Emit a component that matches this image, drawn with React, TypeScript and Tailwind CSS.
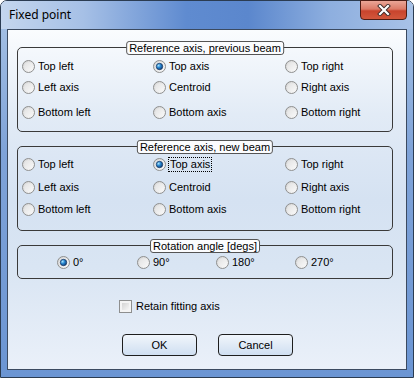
import React from "react";

const Radio = ({ checked }: { checked?: boolean }) => (
  <svg width="13" height="13" viewBox="0 0 13 13" className="shrink-0">
    <defs>
      <linearGradient id="rbg" x1="0" y1="0" x2="1" y2="1">
        <stop offset="0" stopColor="#d2d2d2" />
        <stop offset="1" stopColor="#fdfdfd" />
      </linearGradient>
      <linearGradient id="rin" x1="0" y1="0" x2="1" y2="1">
        <stop offset="0" stopColor="#e2e2e2" />
        <stop offset="1" stopColor="#f8f8f8" />
      </linearGradient>
      <radialGradient id="rdot" cx="0.35" cy="0.35" r="0.7">
        <stop offset="0" stopColor="#a9e2fb" />
        <stop offset="0.45" stopColor="#2a8ad4" />
        <stop offset="1" stopColor="#0d3f7a" />
      </radialGradient>
    </defs>
    <circle cx="6.5" cy="6.5" r="6" fill="url(#rbg)" stroke="#8e8f8f" strokeWidth="1" />
    <circle cx="6.5" cy="6.5" r="4.3" fill="url(#rin)" />
    {checked && <circle cx="6.5" cy="6.5" r="3.2" fill="url(#rdot)" stroke="#1a3a66" strokeWidth="0.8" />}
  </svg>
);

const RItem = ({ label, checked, focus }: { label: string; checked?: boolean; focus?: boolean }) => (
  <div className="flex items-center h-[16px]">
    <Radio checked={checked} />
    <span className={focus ? "ml-[2px] px-[1px] border border-dotted border-black leading-[13px]" : "ml-[3px]"}>{label}</span>
  </div>
);

const Legend = ({ text }: { text: string }) => (
  <div className="absolute left-1/2 -translate-x-1/2 top-[-7px] h-[14px] px-[2px] border border-[#555] rounded-[3px] bg-[#fbfcfe] leading-[12px] whitespace-nowrap">
    {text}
  </div>
);

const Grid = ({ rows, mts }: { rows: [string, string, string][]; mts: string[]; }) => null;

export default function App() {
  const font = { fontFamily: '"Liberation Sans", Arial, sans-serif' };
  return (
    <div
      className="w-[414px] h-[378px] border border-[#2b3c52] rounded-t-[7px] flex flex-col text-[11px] text-black"
      style={font}
    >
      <div className="flex-1 flex flex-col rounded-t-[6px] bg-[linear-gradient(180deg,#a9c4e6_0%,#7fa3d8_40%,#6b95d3_100%)]">
        {/* title bar */}
        <div className="h-[28px] flex items-start rounded-t-[6px] bg-[linear-gradient(90deg,#c4d6ee_0%,#a6c0e6_20%,#5f8bd0_45%,#5b87cd_60%,#8eafdf_80%,#a8c2e7_100%)]">
          <div className="ml-[8px] mt-[6px] text-[12px] leading-[16px] text-black" style={{ fontFamily: '"Noto Sans", "Open Sans", sans-serif' }}>
            Fixed point
          </div>
          <div className="ml-auto mr-[6px] mt-[-1px] w-[47px] h-[20px] rounded-b-[4px] border border-[#4e1d15] bg-[linear-gradient(180deg,#eaa697_0%,#dc7a67_45%,#c8442d_55%,#d2573c_100%)] flex items-center justify-center">
            <svg width="14" height="12" viewBox="0 0 14 12">
              <path d="M3 2 L11 10 M11 2 L3 10" stroke="#3c2a28" strokeWidth="4" strokeLinecap="square" />
              <path d="M3 2 L11 10 M11 2 L3 10" stroke="#ffffff" strokeWidth="2.2" strokeLinecap="square" />
            </svg>
          </div>
        </div>
        {/* client */}
        <div className="mx-[6px] h-[341px] border border-[#3b4a60] bg-[linear-gradient(180deg,#fafcfe_0%,#e2ebf6_25%,#d5e2f2_50%,#d9e5f3_70%,#eaf0f9_100%)] flex flex-col">
          {/* group 1 */}
          <div className="relative ml-[9px] mt-[17px] w-[376px] h-[85px] border border-[#3a3a3a] rounded-[5px]">
            <Legend text="Reference axis, previous beam" />
            <div className="grid grid-cols-[131px_132px_1fr] pl-[4px] mt-[10px]">
              <RItem label="Top left" />
              <RItem label="Top axis" checked />
              <RItem label="Top right" />
            </div>
            <div className="grid grid-cols-[131px_132px_1fr] pl-[4px] mt-[5px]">
              <RItem label="Left axis" />
              <RItem label="Centroid" />
              <RItem label="Right axis" />
            </div>
            <div className="grid grid-cols-[131px_132px_1fr] pl-[4px] mt-[9px]">
              <RItem label="Bottom left" />
              <RItem label="Bottom axis" />
              <RItem label="Bottom right" />
            </div>
          </div>
          {/* group 2 */}
          <div className="relative ml-[9px] mt-[14px] w-[376px] h-[85px] border border-[#3a3a3a] rounded-[5px]">
            <Legend text="Reference axis, new beam" />
            <div className="grid grid-cols-[131px_132px_1fr] pl-[4px] mt-[9px]">
              <RItem label="Top left" />
              <RItem label="Top axis" checked focus />
              <RItem label="Top right" />
            </div>
            <div className="grid grid-cols-[131px_132px_1fr] pl-[4px] mt-[7px]">
              <RItem label="Left axis" />
              <RItem label="Centroid" />
              <RItem label="Right axis" />
            </div>
            <div className="grid grid-cols-[131px_132px_1fr] pl-[4px] mt-[6px]">
              <RItem label="Bottom left" />
              <RItem label="Bottom axis" />
              <RItem label="Bottom right" />
            </div>
          </div>
          {/* group 3 */}
          <div className="relative ml-[9px] mt-[14px] w-[376px] h-[34px] border border-[#3a3a3a] rounded-[5px]">
            <Legend text="Rotation angle [degs]" />
            <div className="grid grid-cols-[80px_79px_79px_1fr] pl-[39px] mt-[8px]">
              <RItem label="0°" checked />
              <RItem label="90°" />
              <RItem label="180°" />
              <RItem label="270°" />
            </div>
          </div>
          {/* checkbox */}
          <div className="ml-[111px] mt-[21px] flex items-center h-[13px]">
            <div className="w-[13px] h-[13px] border border-[#8e8f8f] bg-[#f4f4f4] p-[2px]">
              <div className="w-full h-full bg-[linear-gradient(135deg,#d4d4d4_0%,#f6f6f6_100%)]" />
            </div>
            <span className="ml-[4px]">Retain fitting axis</span>
          </div>
          {/* buttons */}
          <div className="ml-[114px] mt-[21px] flex gap-[21px]">
            <div className="w-[75px] h-[22px] border border-[#1e1e1e] rounded-[4px] bg-[linear-gradient(180deg,#f1f6fc_0%,#e0eaf6_50%,#cfdff1_100%)] flex items-center justify-center">
              OK
            </div>
            <div className="w-[75px] h-[22px] border border-[#1e1e1e] rounded-[4px] bg-[linear-gradient(180deg,#f1f6fc_0%,#e0eaf6_50%,#cfdff1_100%)] flex items-center justify-center">
              Cancel
            </div>
          </div>
        </div>
        <div className="h-[7px]" />
      </div>
    </div>
  );
}
